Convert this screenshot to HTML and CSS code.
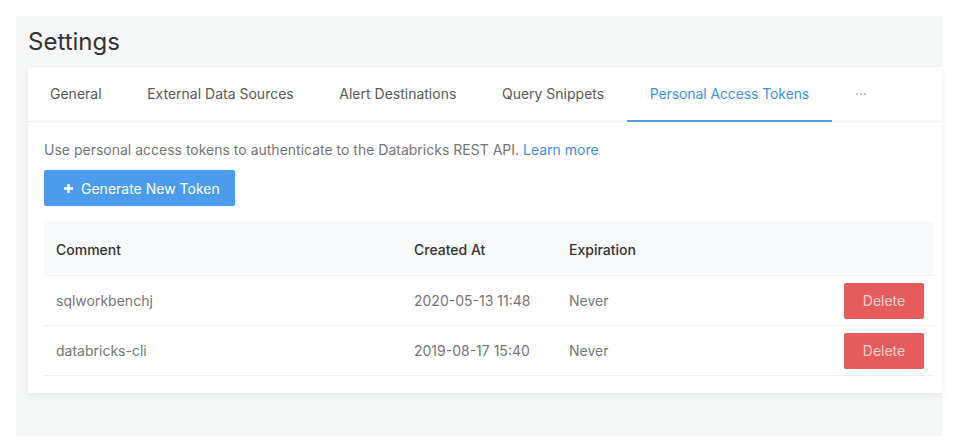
FILE: index.html
```html
<!DOCTYPE html>
<html>
<head>
<meta charset="utf-8">
<link rel="stylesheet" href="styles.css">
</head>
<body>
<div class="page">
  <h1 class="title">Settings</h1>
  <div class="card">
    <div class="tabs">
      <div class="tab">General</div>
      <div class="tab">External Data Sources</div>
      <div class="tab">Alert Destinations</div>
      <div class="tab">Query Snippets</div>
      <div class="tab active">Personal Access Tokens</div>
      <div class="tab more">···</div>
    </div>
    <div class="content">
      <p class="desc">Use personal access tokens to authenticate to the Databricks REST API. <a class="link">Learn more</a></p>
      <button class="btn-primary"><svg class="plus" viewBox="0 0 12 12" width="11" height="11"><path d="M6 1v10M1 6h10" stroke="#fff" stroke-width="2.6"/></svg>Generate New Token</button>
      <div class="table">
        <div class="row head">
          <div class="c1">Comment</div>
          <div class="c2">Created At</div>
          <div class="c3">Expiration</div>
          <div class="c4"></div>
        </div>
        <div class="row">
          <div class="c1">sqlworkbenchj</div>
          <div class="c2">2020-05-13 11:48</div>
          <div class="c3">Never</div>
          <div class="c4"><button class="btn-danger">Delete</button></div>
        </div>
        <div class="row">
          <div class="c1">databricks-cli</div>
          <div class="c2">2019-08-17 15:40</div>
          <div class="c3">Never</div>
          <div class="c4"><button class="btn-danger">Delete</button></div>
        </div>
      </div>
    </div>
  </div>
</div>
</body>
</html>
```
FILE: styles.css
```css
* { box-sizing: border-box; }
body {
  margin: 0;
  background: #fff;
  font-family: Inter, "Liberation Sans", sans-serif;
  font-size: 14px;
  color: #333;
}
.page {
  margin: 16px 13px 0 16px;
  height: 420px;
  background: #f6f7f7;
  padding: 7px 0 0 12px;
}
.title {
  margin: 0 0 6px 0;
  font-size: 24px;
  font-weight: 400;
  line-height: 38px;
  color: #333;
}
.card {
  background: #fff;
  height: 326px;
  box-shadow: 0 3px 8px rgba(0, 0, 0, 0.07);
}
.tabs {
  display: flex;
  height: 55px;
  border-bottom: 1px solid #f0f0f0;
}
.tab {
  padding: 0 22.8px;
  line-height: 54px;
  color: #595959;
  font-size: 14px;
  white-space: nowrap;
}
.tab:first-child { padding-left: 22px; }
.tab.active {
  color: #3d91e6;
  border-bottom: 2px solid #4d9de9;
  height: 55px;
  letter-spacing: -0.1px;
}
.tab.more { color: #999; }
.content {
  padding: 18px 8px 16px 16px;
}
.desc {
  margin: 0;
  line-height: 20px;
  color: #767676;
}
.link { color: #3d91e6; }
.btn-primary {
  margin-top: 10px;
  display: flex;
  align-items: center;
  gap: 7px;
  height: 36px;
  width: 191px;
  padding: 0 0 0 19px;
  border: none;
  border-radius: 2px;
  background: #4b9cee;
  color: #fff;
  font-family: inherit;
  font-size: 14px;
}
.table {
  margin-top: 16px;
}
.row {
  display: flex;
  align-items: center;
  height: 50px;
  border-bottom: 1px solid #f0f0f0;
  color: #767676;
}
.row.head {
  height: 54px;
  padding-top: 2px;
  background: #f8f9fa;
  color: #333;
  font-weight: 500;
}
.c1 { width: 358px; padding-left: 12px; }
.c2 { width: 155px; padding-left: 12px; }
.c3 { width: 155px; padding-left: 12px; }
.c4 { flex: 1; display: flex; justify-content: flex-end; padding-right: 10px; }
.btn-danger {
  width: 80px;
  height: 36px;
  border: none;
  border-radius: 2px;
  background: #e65c5c;
  color: #f7d0d0;
  font-family: inherit;
  font-size: 14px;
}
```
